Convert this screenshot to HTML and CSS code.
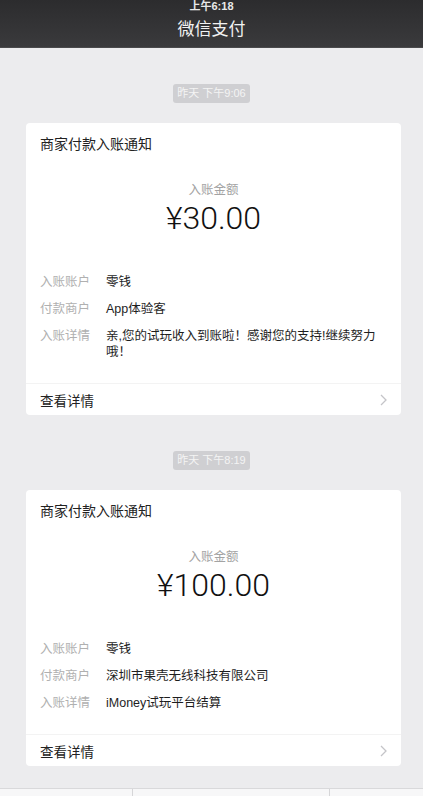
FILE: index.html
```html
<!DOCTYPE html>
<html lang="zh-CN">
<head>
  <meta charset="UTF-8" />
  <meta name="viewport" content="width=device-width, initial-scale=1.0"/>
  <title>微信支付</title>
  <link rel="stylesheet" href="styles.css">
</head>
<body>

  <!-- Шапка -->
  <div class="header">
    <div class="clock">上午6:18</div>
    <div class="header-title">微信支付</div>
  </div>

  <div class="feed">

    <div class="time-pill">昨天 下午9:06</div>

    <div class="card">
      <div class="card-title">商家付款入账通知</div>
      <div class="amount-label">入账金额</div>
      <div class="amount">¥30.00</div>
      <div class="rows">
        <div class="row"><span class="row-key">入账账户</span><span class="row-val">零钱</span></div>
        <div class="row"><span class="row-key">付款商户</span><span class="row-val">App体验客</span></div>
        <div class="row"><span class="row-key">入账详情</span><span class="row-val">亲,您的试玩收入到账啦！感谢您的支持!继续努力哦！</span></div>
      </div>
      <div class="card-footer">
        <span>查看详情</span>
        <svg class="chevron" width="7" height="12" viewBox="0 0 7 12"><path d="M1 1l5 5-5 5" fill="none" stroke="#c4c4c8" stroke-width="1.3"/></svg>
      </div>
    </div>

    <div class="time-pill">昨天 下午8:19</div>

    <div class="card">
      <div class="card-title">商家付款入账通知</div>
      <div class="amount-label">入账金额</div>
      <div class="amount">¥100.00</div>
      <div class="rows">
        <div class="row"><span class="row-key">入账账户</span><span class="row-val">零钱</span></div>
        <div class="row"><span class="row-key">付款商户</span><span class="row-val">深圳市果壳无线科技有限公司</span></div>
        <div class="row"><span class="row-key">入账详情</span><span class="row-val">iMoney试玩平台结算</span></div>
      </div>
      <div class="card-footer">
        <span>查看详情</span>
        <svg class="chevron" width="7" height="12" viewBox="0 0 7 12"><path d="M1 1l5 5-5 5" fill="none" stroke="#c4c4c8" stroke-width="1.3"/></svg>
      </div>
    </div>

  </div>

  <!-- Нижняя панель -->
  <div class="tabbar">
    <div class="tab tab-left"></div>
    <div class="tab tab-mid"></div>
    <div class="tab"></div>
  </div>

</body>
</html>
```

FILE: styles.css
```css
* {
  box-sizing: border-box;
}

body {
  margin: 0;
  width: 423px;
  height: 796px;
  overflow: hidden;
  background: #ececee;
  font-family: 'Liberation Sans', 'Noto Sans CJK SC', sans-serif;
  color: #1a1a1a;
}

.header {
  height: 48px;
  background: linear-gradient(180deg, #2c2c2e, #3a3a3c);
  color: #fff;
  text-align: center;
  border-bottom: 1px solid #4a4a4c;
}

.clock {
  font-size: 11px;
  font-weight: bold;
  line-height: 12px;
  padding-top: 0;
  color: #e8e8e8;
}

.header-title {
  font-size: 17px;
  line-height: 24px;
  margin-top: 6px;
  color: #f2f2f2;
}

.feed {
  display: flex;
  flex-direction: column;
  align-items: center;
}

.time-pill {
  margin-top: 36px;
  height: 19px;
  line-height: 19px;
  padding: 0 4px;
  border-radius: 3px;
  background: #cfcfd2;
  color: #f4f4f4;
  font-size: 11px;
}

.card {
  align-self: stretch;
  margin: 20px 22px 0 26px;
  background: #fff;
  border-radius: 4px;
  padding: 11px 20px 0 14px;
}

.card-title {
  font-size: 14px;
  line-height: 20px;
  color: #222;
}

.amount-label {
  margin-top: 28px;
  text-align: center;
  font-size: 12.5px;
  line-height: 16px;
  color: #a3a3a3;
  padding-left: 6px;
}

.amount {
  margin-top: 2px;
  text-align: center;
  font-family: Roboto, 'Liberation Sans', sans-serif;
  font-weight: 300;
  font-size: 32px;
  line-height: 36px;
  color: #111;
  padding-left: 6px;
}

.rows {
  margin-top: 38px;
  display: flex;
  flex-direction: column;
  gap: 11px;
  font-size: 12.5px;
  line-height: 16px;
}

.row {
  display: flex;
}

.row-key {
  flex: 0 0 66px;
  color: #b0b0b0;
}

.row-val {
  flex: 1;
  color: #1e1e1e;
}

.card-footer {
  margin: 23px -20px 0 -14px;
  padding: 0 14px 0 14px;
  height: 32px;
  border-top: 1px solid #f3f3f3;
  display: flex;
  align-items: center;
  justify-content: space-between;
  font-size: 13.5px;
  color: #222;
}

.chevron {
  margin-right: 0;
}

.tabbar {
  position: absolute;
  left: 0;
  right: 0;
  top: 788px;
  height: 8px;
  display: flex;
  background: #f7f7f8;
  border-top: 1px solid #d9d9db;
}

.tab {
  flex: 1;
}

.tab-left {
  flex: 0 0 133px;
  border-right: 1px solid #d6d6d8;
}

.tab-mid {
  flex: 0 0 197px;
  border-right: 1px solid #d6d6d8;
}
```
